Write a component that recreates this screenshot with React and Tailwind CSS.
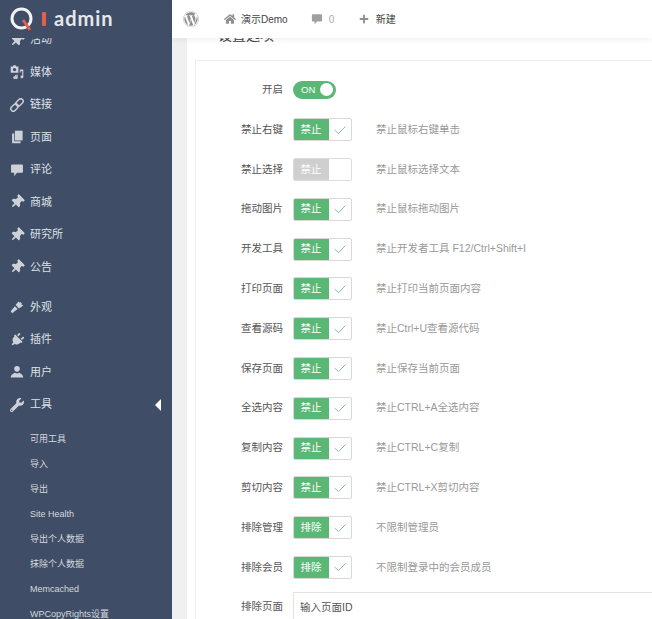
import { FaThumbtack, FaPlug, FaWrench, FaWordpress, FaHome, FaPlus } from 'react-icons/fa';

const CJK = "font-['Liberation_Sans','Noto_Sans_CJK_SC',sans-serif]";

// 媒体图标:相机 + 音符
const MediaIcon = ({ className }) => (
  <svg viewBox="0 0 20 20" className={className} fill="currentColor">
    <path d="M1 2h3l1-1.500h3L9 2h3v9H1z" />
    <circle cx="6.500" cy="6.500" r="2.300" fill="#3f4d66" />
    <path d="M14 6.500h5v10.500a2 2 0 1 1-1.500-1.900V9h-2.500v2H14z" />
    <path d="M7 14.500l4-.8v4.300a1.800 1.800 0 1 1-1.300-1.700v-1.200l-1.500.3V18a1.800 1.800 0 1 1-1.200-1.600z" />
  </svg>
);

const PinIcon = ({ className }) => <FaThumbtack className={`${className} rotate-45`} />;
const PlugIcon = ({ className }) => <FaPlug className={`${className} rotate-45`} />;

const CommentIcon = ({ className }) => (
  <svg viewBox="0 0 20 20" className={className} fill="currentColor">
    <path d="M3 2h14a1.500 1.500 0 0 1 1.500 1.500v9A1.500 1.500 0 0 1 17 14h-7l-4 5v-5H3a1.500 1.500 0 0 1-1.500-1.500v-9A1.500 1.500 0 0 1 3 2z" />
  </svg>
);

const PagesIcon = ({ className }) => (
  <svg viewBox="0 0 20 20" className={className} fill="currentColor">
    <path d="M7 1h11v14H7z" />
    <path d="M3 5h3v11h9v3H3z" />
  </svg>
);

const LinkIcon = ({ className }) => (
  <svg viewBox="0 0 20 20" className={className} fill="none" stroke="currentColor" strokeWidth="2">
    <g transform="rotate(-45 10 10)">
      <rect x="-1" y="6.500" width="12" height="7" rx="3.500" />
      <rect x="9" y="6.500" width="12" height="7" rx="3.500" />
    </g>
  </svg>
);

const BrushIcon = ({ className }) => (
  <svg viewBox="0 0 20 20" className={className} fill="currentColor">
    <path d="M1 16c2-2 4-5 6-7l4 4c-3 2-6 5-8 6z" />
    <path d="M8 7l4-5 2 2 1-1 2 2-1 1 3 2-6 4z" />
  </svg>
);

const UserIcon = ({ className }) => (
  <svg viewBox="0 0 20 20" className={className} fill="currentColor">
    <circle cx="10" cy="5.500" r="4" />
    <path d="M1 18c0-4 4-6 6-7 2 1.500 4 1.500 6 0 2 1 6 3 6 7z" />
  </svg>
);

const menu = [
  { icon: PinIcon, label: '活动' },
  { icon: MediaIcon, label: '媒体' },
  { icon: LinkIcon, label: '链接' },
  { icon: PagesIcon, label: '页面' },
  { icon: CommentIcon, label: '评论' },
  { icon: PinIcon, label: '商城' },
  { icon: PinIcon, label: '研究所' },
  { icon: PinIcon, label: '公告' },
];

const menu2 = [
  { icon: BrushIcon, label: '外观' },
  { icon: PlugIcon, label: '插件' },
  { icon: UserIcon, label: '用户' },
];

const subMenu = ['可用工具', '导入', '导出', 'Site Health', '导出个人数据', '抹除个人数据', 'Memcached', 'WPCopyRights设置'];

const rows = [
  { label: '禁止右键', btn: '禁止', desc: '禁止鼠标右键单击', on: true },
  { label: '禁止选择', btn: '禁止', desc: '禁止鼠标选择文本', on: false },
  { label: '拖动图片', btn: '禁止', desc: '禁止鼠标拖动图片', on: true },
  { label: '开发工具', btn: '禁止', desc: '禁止开发者工具 F12/Ctrl+Shift+I', on: true },
  { label: '打印页面', btn: '禁止', desc: '禁止打印当前页面内容', on: true },
  { label: '查看源码', btn: '禁止', desc: '禁止Ctrl+U查看源代码', on: true },
  { label: '保存页面', btn: '禁止', desc: '禁止保存当前页面', on: true },
  { label: '全选内容', btn: '禁止', desc: '禁止CTRL+A全选内容', on: true },
  { label: '复制内容', btn: '禁止', desc: '禁止CTRL+C复制', on: true },
  { label: '剪切内容', btn: '禁止', desc: '禁止CTRL+X剪切内容', on: true },
  { label: '排除管理', btn: '排除', desc: '不限制管理员', on: true },
  { label: '排除会员', btn: '排除', desc: '不限制登录中的会员成员', on: true },
];

const MenuItem = ({ icon: Icon, label, children }) => (
  <div className="h-[32.5px] flex items-center text-[11px] text-[#dde1e7]">
    <span className="w-[30px] flex justify-center pl-[4px]">
      <Icon className="w-[14px] h-[14px] text-[#cdd2d9]" />
    </span>
    <span className="flex-1">{label}</span>
    {children}
  </div>
);

const Row = ({ label, children }) => (
  <div className="h-[39.8px] flex items-center text-[10.5px]">
    <div className="w-[87px] text-right text-[#555]">{label}</div>
    <div className="ml-[10px] flex items-center flex-1">{children}</div>
  </div>
);

const CheckToggle = ({ btn, on }) => (
  <div className={`flex w-[59px] h-[23px] border rounded-[2px] overflow-hidden bg-white ${on ? 'border-[#d8d8d8]' : 'border-[#dcdcdc]'}`}>
    <div className={`w-[36px] -my-px -ml-px flex items-center justify-center text-white text-[10.5px] ${on ? 'bg-[#5bb776]' : 'bg-[#cfcfcf]'}`}>
      {btn}
    </div>
    {on && (
      <div className="flex-1 flex items-center justify-center">
        <svg viewBox="0 0 12 8" className="w-[12px] h-[8px]" fill="none" stroke="#8fbf9f" strokeWidth="1">
          <path d="M0.500 4l4 3.500 7-7" />
        </svg>
      </div>
    )}
  </div>
);

export default function App() {
  return (
    <div className={`flex h-[619px] overflow-hidden bg-white ${CJK}`}>
      {/* 侧边栏 */}
      <aside className="w-[172px] shrink-0 bg-[#3f4d66] overflow-hidden">
        <div className="relative z-10 h-[38px] bg-[#3f4d66] flex items-center pl-[10px]">
          <svg viewBox="0 0 24 24" className="w-[24px] h-[24px]" fill="none">
            <circle cx="11.500" cy="11.500" r="9.500" stroke="#f1f3f5" strokeWidth="3" />
            <path d="M13 13l7 10" stroke="#e2604f" strokeWidth="3" />
          </svg>
          <span className="ml-[8px] w-[4px] h-[14px] bg-[#e2604f] rounded-[1px]"></span>
          <span className="ml-[8px] mb-[3px] text-[20px] leading-none font-bold tracking-[1px] text-[#e4e7ec] font-['Lato',sans-serif]">admin</span>
        </div>
        <div className="-mt-[14.750px]">
          {menu.map((item) => <MenuItem key={item.label} {...item} />)}
          <div className="h-[7.500px]"></div>
          {menu2.map((item) => <MenuItem key={item.label} {...item} />)}
          <MenuItem icon={FaWrench} label="工具">
            <span className="mr-[11px] border-y-[6.500px] border-r-[6px] border-y-transparent border-r-white"></span>
          </MenuItem>
        </div>
        <div className="pt-[6px]">
          {subMenu.map((s) => (
            <div key={s} className="h-[25px] flex items-center pl-[30px] text-[9px] text-[#d5d9df]">{s}</div>
          ))}
        </div>
      </aside>

      {/* 主区域 */}
      <div className="flex-1 min-w-0 flex flex-col">
        <header className="relative z-10 h-[38px] shrink-0 bg-white shadow-[0_2px_6px_rgba(0,0,0,0.06)] flex items-center text-[10px] text-[#444]">
          <FaWordpress className="ml-[11px] w-[16px] h-[16px] text-[#8f8f8f]" />
          <FaHome className="ml-[25px] w-[12px] h-[12px] text-[#8f8f8f]" />
          <span className="ml-[5px]">演示Demo</span>
          <CommentIcon className="ml-[23px] w-[12px] h-[12px] text-[#a0a0a0]" />
          <span className="ml-[6px] text-[#aaa]">0</span>
          <FaPlus className="ml-[24.5px] w-[10px] h-[10px] text-[#8f8f8f]" />
          <span className="ml-[7px]">新建</span>
        </header>

        <div className="flex-1 flex min-h-0">
          <div className="w-[15px] shrink-0 bg-[#f0f0f1]"></div>
          <div className="flex-1 min-w-0 pl-[8px] overflow-hidden">
            <h2 className="-mt-[11px] ml-[23px] h-[16px] text-[14px] leading-[16px] font-normal text-[#444]">设置选项</h2>
            <div className="mt-[17px] w-[600px] border border-[#eeeeee] pt-[9px]">
              <Row label="开启">
                <div className="w-[43px] h-[18px] rounded-full bg-[#5bb776] flex items-center justify-between pl-[8px] pr-[3px]">
                  <span className="text-white text-[9.500px] font-['Liberation_Sans',sans-serif]">ON</span>
                  <span className="w-[13px] h-[13px] rounded-full bg-white"></span>
                </div>
              </Row>
              {rows.map((r) => (
                <Row key={r.label} label={r.label}>
                  <CheckToggle btn={r.btn} on={r.on} />
                  <span className="ml-[24px] text-[#999]">{r.desc}</span>
                </Row>
              ))}
              <Row label="排除页面">
                <input
                  className="w-full h-[30px] border border-[#e2e2e2] px-[6px] text-[10.5px] placeholder:text-[#555]"
                  placeholder="输入页面ID"
                />
              </Row>
            </div>
          </div>
        </div>
      </div>
    </div>
  );
}
